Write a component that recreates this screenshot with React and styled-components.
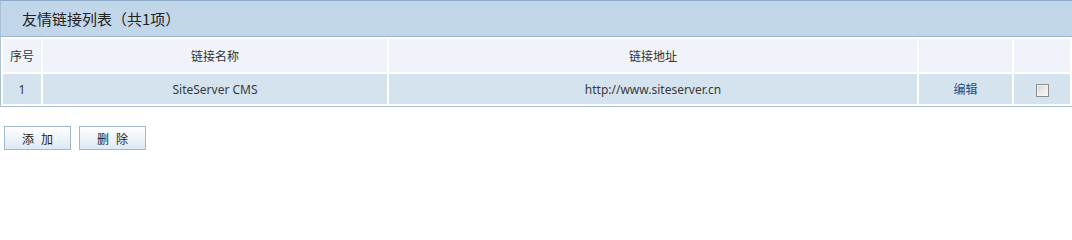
import React from "react";
import styled, { createGlobalStyle } from "styled-components";

const GlobalStyle = createGlobalStyle`
  body {
    margin: 0;
    background: #fff;
    font-family: "Noto Sans", "Noto Sans CJK SC", sans-serif;
    font-size: 12px;
    color: #333;
  }
`;

const Panel = styled.div`
  border: 1px solid #a9c0d6;
  border-top-color: #8eabc9;
  border-right: none;
  background: #fff;
`;

const TitleBar = styled.div`
  height: 35px;
  line-height: 35px;
  padding-left: 21px;
  background: #c2d6ea;
  border-bottom: 1px solid #9fb5cc;
  font-family: "Noto Sans CJK SC", sans-serif;
  font-size: 15px;
  color: #222;
`;

const Table = styled.table`
  width: 100%;
  border-collapse: separate;
  border-spacing: 2px;
  table-layout: fixed;
`;

const HeadCell = styled.td`
  height: 33px;
  padding: 0;
  background: #f0f4fa;
  text-align: center;
  font-family: "Noto Sans CJK SC", sans-serif;
  font-size: 12px;
  color: #333;
  width: ${(p) => p.w || "auto"};
`;

const Cell = styled.td`
  height: 30px;
  padding: 0;
  background: #d5e3ee;
  text-align: center;
  font-family: "Noto Sans", "Noto Sans CJK SC", sans-serif;
  font-size: 12px;
  color: #3a3a3a;
`;

const EditLink = styled.a`
  color: #1d4e85;
  text-decoration: none;
  font-family: "Noto Sans CJK SC", sans-serif;
  cursor: pointer;
`;

const Check = styled.input`
  appearance: none;
  width: 13px;
  height: 13px;
  margin: 0;
  vertical-align: middle;
  border: 1px solid #8c8c8c;
  border-radius: 0;
  background: linear-gradient(135deg, #d6d6d6, #fbfbfb);
  box-shadow: inset 0 0 0 1px #f4f4f4;
  cursor: pointer;
  &:checked::after {
    content: "✓";
    display: block;
    font-size: 10px;
    line-height: 11px;
    text-align: center;
    color: #333;
  }
`;

const Actions = styled.div`
  display: flex;
  gap: 8px;
  padding: 19px 0 0 4px;
`;

const Button = styled.button`
  width: 67px;
  height: 24px;
  padding: 0;
  border: 1px solid #a3b8cf;
  background: linear-gradient(#ffffff, #dce8f5);
  font-family: "Noto Sans CJK SC", sans-serif;
  font-size: 12px;
  letter-spacing: 7px;
  text-indent: 7px;
  color: #222;
  cursor: pointer;
`;

const links = [
  { id: 1, name: "SiteServer CMS", url: "http://www.siteserver.cn" },
];

export default function App() {
  return (
    <>
      <GlobalStyle />
      <Panel>
        <TitleBar>友情链接列表（共{links.length}项）</TitleBar>
        <Table>
          <tbody>
            <tr>
              <HeadCell w="38px">序号</HeadCell>
              <HeadCell w="344px">链接名称</HeadCell>
              <HeadCell>链接地址</HeadCell>
              <HeadCell w="93px"></HeadCell>
              <HeadCell w="56px"></HeadCell>
            </tr>
            {links.map((l) => (
              <tr key={l.id}>
                <Cell>{l.id}</Cell>
                <Cell>{l.name}</Cell>
                <Cell>{l.url}</Cell>
                <Cell>
                  <EditLink>编辑</EditLink>
                </Cell>
                <Cell>
                  <Check type="checkbox" />
                </Cell>
              </tr>
            ))}
          </tbody>
        </Table>
      </Panel>
      <Actions>
        <Button>添加</Button>
        <Button>删除</Button>
      </Actions>
    </>
  );
}
